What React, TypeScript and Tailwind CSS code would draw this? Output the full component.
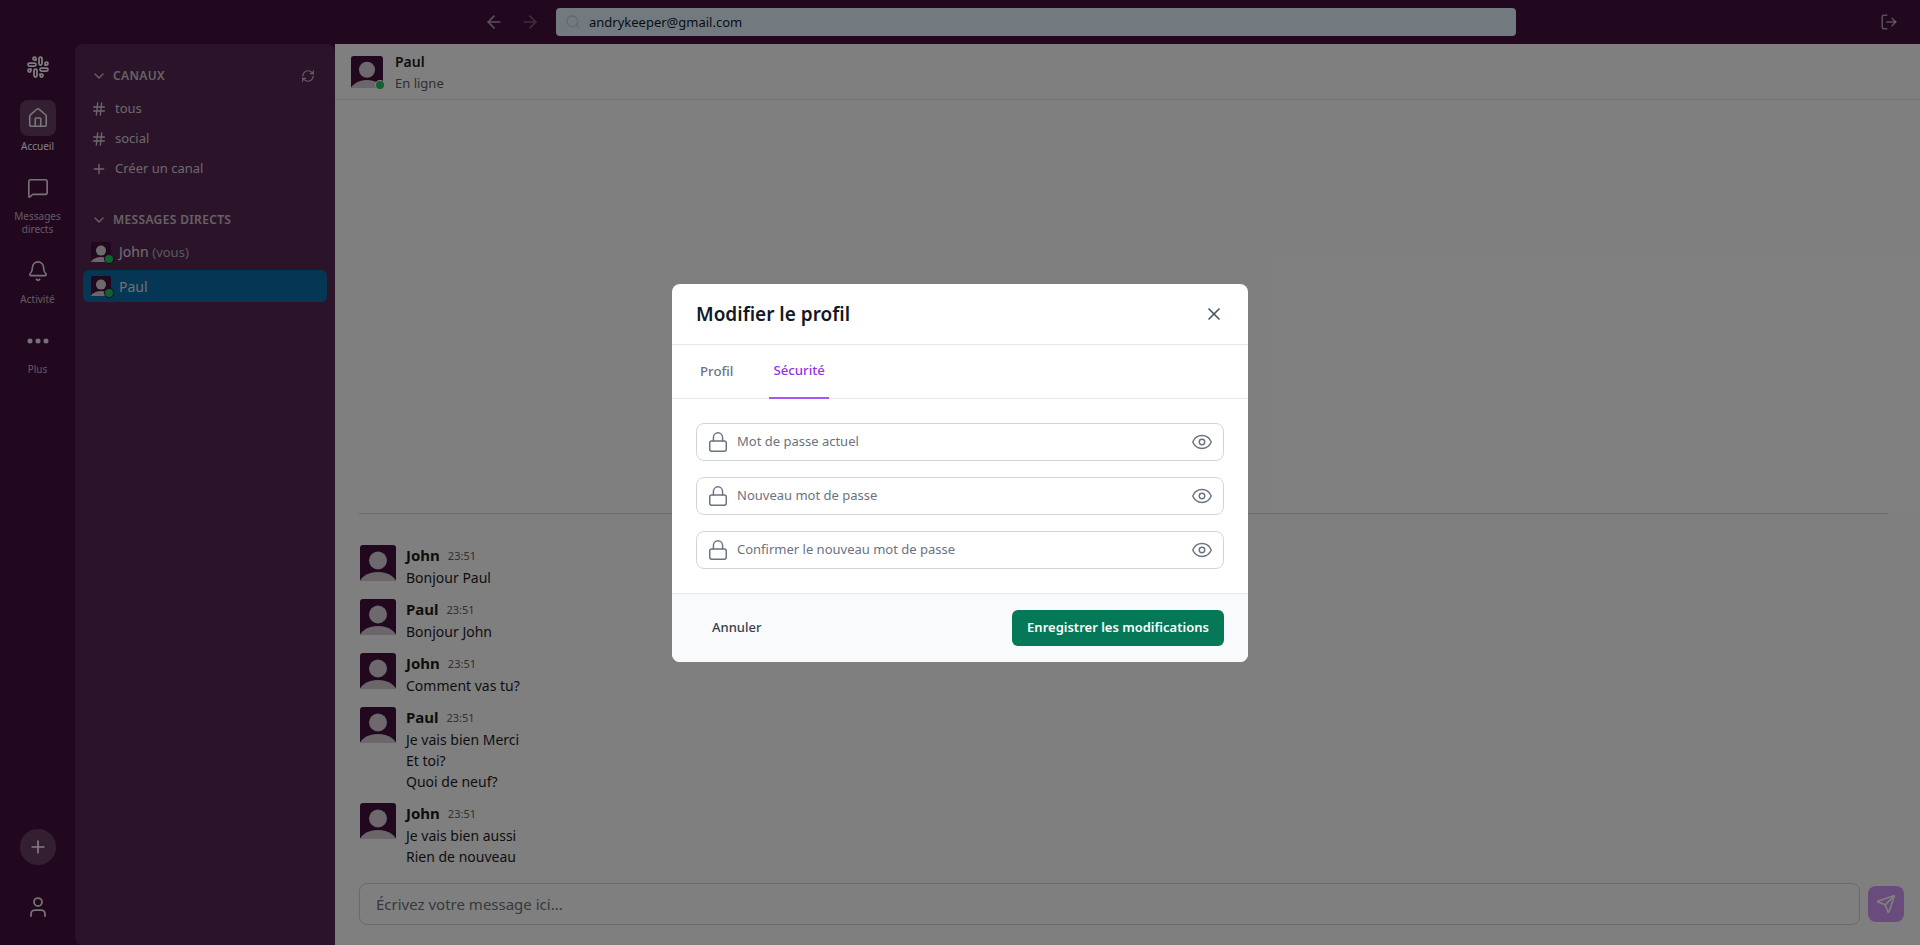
import {
  ArrowLeft,
  ArrowRight,
  Bell,
  ChevronDown,
  Eye,
  Hash,
  House,
  Lock,
  LogOut,
  MessageSquare,
  Plus,
  RefreshCw,
  Search,
  Send,
  Slack,
  User,
  X,
} from "lucide-react";

const Avatar = ({ size }: { size: number }) => (
  <svg width={size} height={size} viewBox="0 0 36 36" className="block shrink-0">
    <defs>
      <clipPath id={`clip-${size}`}>
        <path d="M0 3a3 3 0 0 1 3-3h30a3 3 0 0 1 3 3v33H0z" />
      </clipPath>
    </defs>
    <g clipPath={`url(#clip-${size})`}>
      <rect width="36" height="36" fill="#44103f" />
      <circle cx="18" cy="15.5" r="9" fill="#dcd3da" />
      <ellipse cx="18" cy="41" rx="19.5" ry="14" fill="#d4ccd3" />
    </g>
  </svg>
);

const DirectRow = ({ name, you, active }: { name: string; you?: boolean; active?: boolean }) => (
  <div className={`flex h-8 items-center gap-2 rounded-md pl-2 ${active ? "bg-[#0b6da6]" : ""}`}>
    <div className="relative">
      <Avatar size={20} />
      <span className="absolute -bottom-[1px] -right-[2px] h-2 w-2 rounded-full bg-[#22c55e] ring-1 ring-[#44103f]" />
    </div>
    <span className="text-[14px] text-[#e6dde5]">
      {name} {you && <span className="text-[13px] text-[#b9adb8]">(vous)</span>}
    </span>
  </div>
);

const RailItem = ({ icon, label, active }: { icon: React.ReactNode; label: React.ReactNode; active?: boolean }) => (
  <div className="flex w-full flex-col items-center">
    <div className={`flex h-9 w-9 items-center justify-center rounded-lg text-white/90 ${active ? "bg-white/20" : ""}`}>{icon}</div>
    <span className={`mt-1 text-center text-[10px] leading-[13px] ${active ? "text-white" : "text-white/70"}`}>{label}</span>
  </div>
);

const Message = ({ name, lines }: { name: string; lines: string[] }) => (
  <div className="flex gap-[10px] pl-px">
    <Avatar size={36} />
    <div>
      <div className="flex h-[22px] items-start gap-2">
        <span className="text-[15px] font-bold leading-[20px] text-[#1d1c1d]">{name}</span>
        <span className="text-[11px] leading-[22px] text-[#616061]">23:51</span>
      </div>
      {lines.map((l) => (
        <div key={l} className="text-[14px] leading-[21px] text-[#1d1c1d]">
          {l}
        </div>
      ))}
    </div>
  </div>
);

const Field = ({ placeholder }: { placeholder: string }) => (
  <div className="flex h-[38px] items-center rounded-lg border border-[#d1d5db] px-[10px]">
    <Lock size={22} strokeWidth={1.6} className="text-[#6b7280]" />
    <span className="ml-2 flex-1 pt-px text-[13px] text-[#6b7280]">{placeholder}</span>
    <Eye size={22} strokeWidth={1.6} className="text-[#6b7280]" />
  </div>
);

export default function App() {
  return (
    <div className="relative flex h-[945px] w-full flex-col overflow-hidden bg-[#44103f] font-['Noto_Sans',sans-serif]">
      {/* Top bar */}
      <div className="flex h-[44px] shrink-0 items-center">
        <div className="flex w-[556px] shrink-0 justify-end gap-4 pr-4 text-white">
          <ArrowLeft size={20} className="opacity-60" />
          <ArrowRight size={20} className="opacity-30" />
        </div>
        <div className="flex h-7 w-[960px] items-center rounded bg-[#e6f4ff] pl-[9px]">
          <Search size={16} className="text-[#c8d2e0]" />
          <span className="ml-2 pt-px text-[13px] text-[#111827]">andrykeeper@gmail.com</span>
        </div>
        <div className="flex flex-1 justify-end pr-[22px]">
          <LogOut size={18} className="text-white/60" />
        </div>
      </div>

      <div className="flex min-h-0 flex-1">
        {/* Rail */}
        <div className="flex w-[75px] shrink-0 flex-col items-center pt-[11px] pb-[26px]">
          <Slack size={24} className="mb-[21px] text-white" strokeWidth={1.75} />
          <div className="flex w-full flex-col gap-[17px]">
            <RailItem active icon={<House size={22} strokeWidth={1.75} />} label="Accueil" />
            <RailItem icon={<MessageSquare size={22} strokeWidth={1.75} />} label={<>Messages<br />directs</>} />
            <RailItem icon={<Bell size={22} strokeWidth={1.75} />} label="Activité" />
            <RailItem
              icon={
                <svg width="22" height="6" viewBox="0 0 22 6" fill="currentColor">
                  <circle cx="3" cy="3" r="2.5" />
                  <circle cx="11" cy="3" r="2.5" />
                  <circle cx="19" cy="3" r="2.5" />
                </svg>
              }
              label="Plus"
            />
          </div>
          <div className="mt-auto flex flex-col items-center gap-[30px]">
            <div className="flex h-9 w-9 items-center justify-center rounded-full bg-white/20 text-white">
              <Plus size={20} />
            </div>
            <User size={24} strokeWidth={1.75} className="text-white/90" />
          </div>
        </div>

        {/* Channels panel */}
        <div className="w-[260px] shrink-0 rounded-t-lg rounded-bl-lg bg-[#562952] px-2 pt-[21px] text-[13px] text-[#d9cfd8]">
          <div className="flex h-[22px] items-center pl-2 pr-3 text-[#cdc3cc]">
            <ChevronDown size={16} />
            <span className="ml-[6px] flex-1 text-[12px] font-semibold tracking-[0.35px]">CANAUX</span>
            <RefreshCw size={14} />
          </div>
          <div className="mt-[7px]">
            {["tous", "social"].map((c) => (
              <div key={c} className="flex h-[30px] items-center gap-2 pl-2">
                <Hash size={16} />
                <span>{c}</span>
              </div>
            ))}
            <div className="flex h-[30px] items-center gap-2 pl-2">
              <Plus size={16} />
              <span>Créer un canal</span>
            </div>
          </div>
          <div className="mt-[25px] flex h-[22px] items-center pl-2 text-[#cdc3cc]">
            <ChevronDown size={16} />
            <span className="ml-[6px] text-[12px] font-semibold tracking-[0.35px]">MESSAGES DIRECTS</span>
          </div>
          <div className="mt-[5px] flex flex-col gap-[2px]">
            <DirectRow name="John" you />
            <DirectRow name="Paul" active />
          </div>
        </div>

        {/* Chat */}
        <div className="flex min-w-0 flex-1 flex-col bg-white">
          <div className="flex h-[56px] shrink-0 items-center gap-[12px] border-b border-[#e5e7eb] px-[16px]">
            <div className="relative">
              <Avatar size={32} />
              <span className="absolute -bottom-[1px] -right-[1px] h-2 w-2 rounded-full bg-[#22c55e] ring-1 ring-white" />
            </div>
            <div className="pt-[2px]">
              <div className="text-[14px] font-semibold leading-[20px] text-[#1d1c1d]">Paul</div>
              <div className="mt-px text-[13px] leading-[20px] text-[#616061]">En ligne</div>
            </div>
          </div>
          <div className="flex min-h-0 flex-1 flex-col justify-end px-[24px] pb-[16px]">
            <div className="mb-[31px] mr-2 border-t border-[#d1d5db]" />
            <div className="flex flex-col gap-[11px]">
              <Message name="John" lines={["Bonjour Paul"]} />
              <Message name="Paul" lines={["Bonjour John"]} />
              <Message name="John" lines={["Comment vas tu?"]} />
              <Message name="Paul" lines={["Je vais bien Merci", "Et toi?", "Quoi de neuf?"]} />
              <Message name="John" lines={["Je vais bien aussi", "Rien de nouveau"]} />
            </div>
          </div>
          <div className="flex items-center gap-2 pb-[20px] pl-[24px] pr-[16px]">
            <div className="flex h-[42px] flex-1 items-center rounded-lg border border-[#d1d5db] px-4 text-[15px] text-[#6b7280]">
              Écrivez votre message ici...
            </div>
            <div className="flex h-9 w-9 items-center justify-center rounded-lg bg-[#d496fb] text-white">
              <Send size={20} />
            </div>
          </div>
        </div>
      </div>

      {/* Modal */}
      <div className="absolute inset-0 flex items-center justify-center bg-black/50">
        <div className="w-[576px] overflow-hidden rounded-lg bg-white">
          <div className="flex h-[61px] items-center justify-between border-b border-[#e5e7eb] px-6">
            <h2 className="pt-[2px] text-[19px] font-semibold text-[#111827]">Modifier le profil</h2>
            <X size={20} className="text-[#4b5563]" />
          </div>
          <div className="flex h-[54px] items-stretch gap-8 border-b border-[#e5e7eb] px-6 text-[13.25px] font-medium">
            <div className="flex items-center px-1 pt-px text-[#6b7280]">Profil</div>
            <div className="-mb-px flex items-center border-b-2 border-[#a855f7] px-1 pt-px text-[#9333ea]">Sécurité</div>
          </div>
          <div className="flex flex-col gap-4 p-6">
            <Field placeholder="Mot de passe actuel" />
            <Field placeholder="Nouveau mot de passe" />
            <Field placeholder="Confirmer le nouveau mot de passe" />
          </div>
          <div className="flex h-[69px] items-center justify-between border-t border-[#e5e7eb] bg-[#f9fafb] px-6 pt-px">
            <span className="px-4 text-[13px] font-medium text-[#374151]">Annuler</span>
            <div className="flex h-9 w-[212px] items-center justify-center rounded-md bg-[#047857] text-[13px] font-semibold text-white">
              Enregistrer les modifications
            </div>
          </div>
        </div>
      </div>
    </div>
  );
}
